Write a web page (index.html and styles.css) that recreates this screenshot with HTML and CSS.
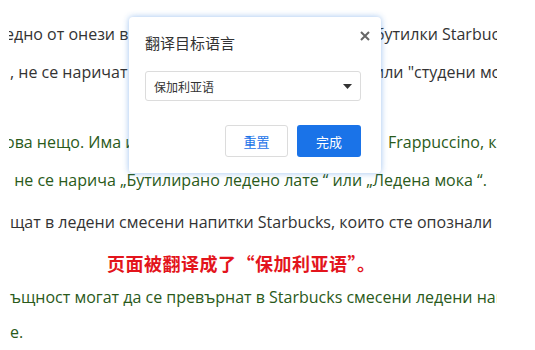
FILE: index.html
```html
<!DOCTYPE html>
<html>
<head>
    <title>翻译</title>
    <link rel="stylesheet" href="styles.css">
</head>
<body>
    <div class="viewport">
        <div class="para p1">
            <div class="ln split"><span class="cut">едно от онези видове ледени</span><span class="rt r1">бутилки Starbucks</span></div>
            <div class="ln split"><span>, не се наричат ледено кафе или</span><span class="rt r2">или "студени мока"</span></div>
        </div>
        <div class="para p2 green">
            <div class="ln split"><span class="cut">ова нещо. Има и такива</span><span class="rt r3">Frappuccino, която</span></div>
            <div class="ln"><span>&nbsp;не се нарича „Бутилирано ледено лате “ или „Ледена мока “.</span></div>
        </div>
        <div class="para p3">
            <div class="ln">щат в ледени смесени напитки Starbucks, които сте опознали и</div>
        </div>
        <div class="caption">页面被翻译成了“保加利亚语”。</div>
        <div class="para p4 green">
            <div class="ln">ъщност могат да се превърнат в Starbucks смесени ледени напитки</div>
            <div class="ln">е.</div>
        </div>
    </div>

    <!-- 翻译弹窗 -->
    <div class="dialog">
        <div class="dialog-head">
            <span class="dialog-title">翻译目标语言</span>
            <svg class="close" width="10" height="10" viewBox="0 0 10 10">
                <path d="M1 1L9 9M9 1L1 9" stroke="#666" stroke-width="2" fill="none"/>
            </svg>
        </div>
        <div class="select">
            <span>保加利亚语</span>
            <svg width="9" height="5" viewBox="0 0 9 5"><path d="M0 0H9L4.5 5Z" fill="#333"/></svg>
        </div>
        <div class="actions">
            <button class="btn btn-reset">重置</button>
            <button class="btn btn-done">完成</button>
        </div>
    </div>
</body>
</html>
```

FILE: styles.css
```css
body {
    margin: 0;
    background: #fff;
    font-family: 'Open Sans', 'Noto Sans CJK SC', sans-serif;
    font-size: 16px;
    color: #333;
    overflow: hidden;
}
.viewport {
    margin-left: 9px;
    width: 488px;
    height: 350px;
    overflow: hidden;
    white-space: nowrap;
}
.green {
    color: #2a5a1a;
}
.p1 {
    padding-top: 15px;
    line-height: 38px;
}
.p2 {
    margin-top: 33px;
    line-height: 37.5px;
}
.p3 {
    margin-top: 4px;
    line-height: 38px;
}
.p4 {
    line-height: 35px;
}
.ln {
    padding-left: 1px;
}
.split {
    display: grid;
    grid-template-columns: 372px 1fr;
    overflow: hidden;
}
.split > span {
    overflow: hidden;
}
.cut {
    margin-left: -5px;
}
.r1 { margin-left: -7px; }
.r2 { margin-left: -8px; }
.r3 { padding-left: 6px; }
.caption {
    margin-top: 6px;
    height: 33px;
    line-height: 33px;
    padding-left: 98px;
    color: #e3141c;
    font-family: 'Noto Sans CJK SC', sans-serif;
    font-weight: bold;
    font-size: 18px;
    letter-spacing: 0.5px;
}

.dialog {
    position: absolute;
    left: 129px;
    top: 17px;
    width: 252px;
    box-sizing: border-box;
    padding: 16px 20px 16px 16px;
    background: #fff;
    border-radius: 4px;
    box-shadow: 0 0 6px rgba(40, 120, 220, 0.45);
    font-family: 'Noto Sans CJK SC', sans-serif;
}
.dialog-head {
    display: flex;
    justify-content: space-between;
    align-items: flex-start;
    height: 20px;
}
.dialog-title {
    font-size: 15px;
    line-height: 20px;
    color: #333;
}
.close {
    margin: -2px -9px 0 0;
}
.select {
    margin-top: 18px;
    height: 30px;
    box-sizing: border-box;
    border: 1px solid #dcdcdc;
    border-radius: 3px;
    display: flex;
    align-items: center;
    justify-content: space-between;
    padding: 0 8px 0 8px;
    font-size: 12px;
    color: #333;
}
.actions {
    margin-top: 24px;
    display: flex;
    justify-content: flex-end;
    gap: 9px;
}
.btn {
    height: 32px;
    width: 64px;
    border-radius: 3px;
    font-family: 'Noto Sans CJK SC', sans-serif;
    font-size: 13px;
    cursor: pointer;
}
.btn-reset {
    width: 63px;
    background: #fff;
    border: 1px solid #dcdcdc;
    color: #1a73e8;
}
.btn-done {
    background: #1a73e8;
    border: none;
    color: #fff;
}
```
